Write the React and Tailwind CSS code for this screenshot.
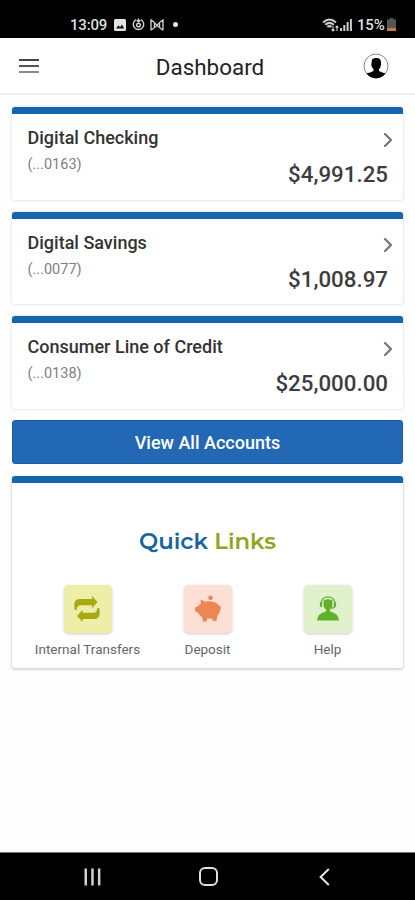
import { ChevronRight } from 'lucide-react';

const accounts = [
  { name: 'Digital Checking', mask: '(...0163)', balance: '$4,991.25' },
  { name: 'Digital Savings', mask: '(...0077)', balance: '$1,008.97' },
  { name: 'Consumer Line of Credit', mask: '(...0138)', balance: '$25,000.00' },
];

const quickLinks = [
  { label: 'Internal Transfers', tile: 'bg-[#eeeea8]', Icon: TransferIcon },
  { label: 'Deposit', tile: 'bg-[#fddfd5]', Icon: PiggyIcon },
  { label: 'Help', tile: 'bg-[#e1f1cc]', Icon: HelpIcon },
];

function TransferIcon() {
  return (
    <svg viewBox="0 0 26 26" className="w-[26px] h-[26px] -ml-[2px] -mt-px" fill="#a9a914">
      <path d="M0.8 14Q-0.2 9 0.8 6Q2 3 5.5 3H18V0L23.5 6L18 12.2V9.2H6.5Q3 9.2 2.6 14Z" />
      <path d="M25.2 12Q26.2 17 25.2 20Q24 23 20.5 23H8.5V26L3 20L8.5 13.8V16.8H19.5Q23 16.8 23.4 12Z" />
    </svg>
  );
}

function PiggyIcon() {
  return (
    <svg viewBox="0 0 26 27" className="w-[26px] h-[27px] -mt-[2px]" fill="#ec8654">
      <circle cx="15.5" cy="2.7" r="2.3" />
      <path d="M5.5 4.5L10.5 6.8Q14.5 5.8 18.5 7Q23.5 8.5 24.3 11.5L26 10.5L25.6 14Q25 18.5 22 21.5L21.5 26H18L17 23.5H12.5L11.5 26.5H8L7.2 22.5Q4.5 20.5 3.2 18L0 16V12.5L2.8 11.3Q4 9.5 6 8.5Z" />
    </svg>
  );
}

function HelpIcon() {
  return (
    <svg viewBox="0 0 22 25" className="w-[22px] h-[25px] -mt-px" fill="#60b22d">
      <path d="M4 10V7Q5 0.8 11 0.8Q17 0.8 18 7V10Q17.5 12 14.5 12.5" fill="none" stroke="#60b22d" strokeWidth="1.2" />
      <rect x="2.9" y="6" width="2.2" height="5" rx="1" />
      <rect x="16.9" y="6" width="2.2" height="5" rx="1" />
      <path d="M6.5 4.5Q11 1.8 15.5 4.5V10Q14.8 12.5 13 13.5V15.5Q21.5 17 22 24.5H0Q0.5 17 9 15.5V13.5Q7.2 12.5 6.5 10Z" />
    </svg>
  );
}

function StatusBar() {
  return (
    <div className="h-[38px] shrink-0 bg-black text-[#dedede] flex items-center justify-between pl-[70px] pr-[19px] pt-[11px]">
      <div className="flex items-center">
        <span className="w-[44px] text-[15px] leading-[18px] tracking-[-0.2px] font-medium whitespace-nowrap">13:09</span>
        <svg viewBox="0 0 12 12" className="w-[12px] h-[12px]">
          <rect width="12" height="12" rx="1.5" fill="#e4e4e4" />
          <path d="M2 9.5L4.5 6.3L6 8.2L8 5.5L10.2 9.5Z" fill="#111111" />
        </svg>
        <svg viewBox="0 0 14 14" className="w-[13px] h-[13px] ml-[6px]" fill="none" stroke="#d0d0d0" strokeWidth="1.5">
          <path d="M4.5 1.8A5.6 5.6 0 1 0 9.5 1.8" />
          <path d="M7 0.5V4M5 2.5L7 4.2L9 2.5" />
          <circle cx="7" cy="7.6" r="2" />
        </svg>
        <svg viewBox="0 0 14 12" className="w-[14px] h-[12px] ml-[5px]" fill="none" stroke="#c8c8c8" strokeWidth="1.4">
          <path d="M1 11.3V0.9L4.5 3.5V8.5L1 11.3M13 11.3V0.9L9.5 3.5V8.5L13 11.3" />
          <path d="M4.5 4L7 6L9.5 4M4.5 8.5L7 6.5L9.5 8.5" />
        </svg>
        <span className="w-[5px] h-[5px] ml-[9px] rounded-full bg-[#e6e6e6]" />
      </div>
      <div className="flex items-center">
        <svg viewBox="0 0 17 14" className="w-[17px] h-[14px] mr-px -ml-[3px]" fill="none" stroke="#cccccc" strokeWidth="2">
          <path d="M1 4.5Q7.5 -1.5 14 4.5M3.2 6.8Q7.5 3 11.8 6.8M5.3 8.9Q7.5 7.3 9.5 8.9" />
          <path d="M11 13V8M9.5 11.5L11 13L12.5 11.5M15 13V8M13.6 9.5L15 8L16.4 9.5" strokeWidth="1.1" />
        </svg>
        <svg viewBox="0 0 12 12" className="w-[12px] h-[12px]" fill="#cccccc">
          <rect y="9" width="2" height="3" />
          <rect x="3.3" y="6" width="2" height="6" />
          <rect x="6.6" y="3" width="2" height="9" />
          <rect x="9.9" width="2" height="12" />
        </svg>
        <span className="w-[32px] ml-[5px] text-[15px] leading-[18px] tracking-[-0.2px] font-medium">15%</span>
        <svg viewBox="0 0 9 13" className="w-[9px] h-[13px] -ml-[2px]">
          <path d="M2.5 0H6.5V1.5H9V13H0V1.5H2.5Z" fill="#555555" />
          <rect y="10" width="9" height="3" fill="#c27a50" />
        </svg>
      </div>
    </div>
  );
}

function Header() {
  return (
    <header className="h-[57px] shrink-0 bg-white border-b-2 border-[#f0f0f0] grid grid-cols-[38px_1fr_26px] items-center pl-[19px] pr-[26px]">
      <div className="flex flex-col gap-[4px]">
        <span className="w-[20px] h-[2px] bg-[#444444]" />
        <span className="w-[20px] h-[2px] bg-[#555555]" />
        <span className="w-[20px] h-[2px] bg-[#888888]" />
      </div>
      <h1 className="text-[22.4px] leading-[28px] text-[#222222] pt-[3px] text-center">Dashboard</h1>
      <svg viewBox="0 0 26 26" className="w-[26px] h-[26px]">
        <circle cx="13" cy="13" r="12" fill="#ffffff" stroke="#777777" strokeWidth="0.9" />
        <path d="M9 6.5Q10.5 4.8 13 5Q18 4.5 18 9.5V12Q17.5 15 16 16V18Q19.5 19.5 22.5 20.5Q18.5 25.2 13 25.2Q7.5 25.2 3.5 20.5Q7 19.5 10.5 18V16Q8.5 14.5 8.3 12Z" fill="#000000" />
      </svg>
    </header>
  );
}

function AccountCard({ name, mask, balance }) {
  return (
    <div className="h-[92.5px] rounded-[3px] border-t-[7px] border-t-[#1464ae] bg-white shadow-[0_0_2px_1px_rgba(0,0,0,0.09)] pl-[15.5px] pr-[15px] pt-[13px]">
      <div className="flex justify-between">
        <div>
          <div className="text-[18px] leading-[22px] font-medium text-[#333333]">{name}</div>
          <div className="text-[14.5px] leading-[20px] pt-[6px] text-[#808080]">{mask}</div>
        </div>
        <ChevronRight className="w-[24px] h-[24px] mt-px -mr-[12px] text-[#777777]" strokeWidth={2.3} />
      </div>
      <div className="-mt-[14px] text-right text-[22.3px] leading-[26px] font-medium text-[#3d3d3d]">{balance}</div>
    </div>
  );
}

function QuickLinks() {
  return (
    <section className="h-[192px] rounded-[3px] border-t-[7px] border-t-[#1464ae] bg-white shadow-[0_1px_2px_1px_rgba(0,0,0,0.15)]">
      <h2 className="pt-[44px] text-center font-['Montserrat','Inter',sans-serif] text-[22.8px] leading-[28px] font-semibold text-[#17649f]">
        Quick <span className="text-[#91a51c]">Links</span>
      </h2>
      <div className="grid grid-cols-[120px_120px_120px] justify-center pt-[30px]">
        {quickLinks.map(({ label, tile, Icon }) => (
          <div key={label} className="flex flex-col items-center">
            <div className={`w-[48px] h-[48px] rounded-[5px] flex items-center justify-center shadow-[0_1px_3px_rgba(0,0,0,0.22)] ${tile}`}>
              <Icon />
            </div>
            <span className="pt-[7px] text-[13.5px] leading-[18px] text-[#666666] whitespace-nowrap">{label}</span>
          </div>
        ))}
      </div>
    </section>
  );
}

function NavBar() {
  return (
    <nav className="h-[48px] shrink-0 bg-black border-t border-[#777777] grid grid-cols-[18px_1fr_11px] items-center justify-items-center pl-[84px] pr-[85px]">
      <svg viewBox="0 0 18 18" className="w-[18px] h-[18px]" fill="#d0d0d0">
        <rect x="0.5" y="0.5" width="2.5" height="17" />
        <rect x="7.2" y="0.5" width="2.5" height="17" />
        <rect x="13.9" y="0.5" width="2.5" height="17" />
      </svg>
      <span className="w-[19px] h-[19px] mr-[4px] rounded-[6px] border-2 border-[#e0e0e0]" />
      <svg viewBox="0 0 11 18" className="w-[11px] h-[18px]" fill="none" stroke="#e6e6e6" strokeWidth="2">
        <path d="M9.8 1L1.6 9L9.8 17" />
      </svg>
    </nav>
  );
}

export default function App() {
  return (
    <div className="w-[415px] h-[900px] flex flex-col bg-white overflow-hidden font-['Roboto',sans-serif]">
      <StatusBar />
      <Header />
      <main className="flex-1 px-[12px] pt-[12px] flex flex-col bg-[#fefefe]">
        <div className="flex flex-col gap-[12px]">
          {accounts.map((account) => (
            <AccountCard key={account.name} {...account} />
          ))}
        </div>
        <button className="h-[44px] shrink-0 mt-[11.5px] mb-[12px] rounded-[3px] bg-[#2368b4] border border-[#1262aa] text-white text-[18px] font-medium">
          View All Accounts
        </button>
        <QuickLinks />
      </main>
      <NavBar />
    </div>
  );
}
